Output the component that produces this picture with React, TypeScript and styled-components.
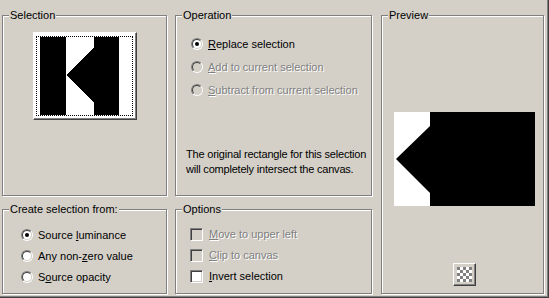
import React from "react";
import styled, { createGlobalStyle } from "styled-components";

const Global = createGlobalStyle`
  html, body { margin: 0; padding: 0; background: #d4d0c8; }
  body { font-family: "Liberation Sans", Arial, sans-serif; font-size: 11px; color: #000; }
`;

const Dialog = styled.div`
  width: 549px;
  height: 298px;
  box-sizing: border-box;
  background: #d4d0c8;
  border-right: 1px solid #404040;
  border-bottom: 1px solid #404040;
  box-shadow: inset -1px -1px 0 #808080;
  padding: 15px 0 0 2px;
  display: grid;
  grid-template-columns: 165px 197px 164px;
  grid-template-rows: 181px 85px;
  grid-template-areas:
    "sel op prev"
    "create opts prev";
  column-gap: 8px;
  row-gap: 13px;
`;

const Group = styled.div<{ $area: string; $shift?: number }>`
  position: relative;
  grid-area: ${(p) => p.$area};
  margin-left: ${(p) => p.$shift ?? 0}px;
  border: 1px solid #808080;
  box-shadow: inset 1px 1px 0 #fff, 1px 1px 0 #fff;
  display: flex;
  flex-direction: column;
`;

const Legend = styled.span`
  position: absolute;
  top: -7px;
  left: 6px;
  padding: 0 1px;
  background: #d4d0c8;
  line-height: 13px;
  white-space: nowrap;
`;

const ThumbButton = styled.div`
  margin: 16px auto 0;
  width: 104px;
  height: 88px;
  box-sizing: border-box;
  background: #fff;
  border: 1px solid;
  border-color: #fff #404040 #404040 #fff;
  box-shadow: inset -1px -1px 0 #808080;
  position: relative;
  display: flex;
  align-items: center;
  justify-content: center;
`;

const FocusRect = styled.div`
  width: 97px;
  height: 80px;
  box-sizing: border-box;
  border: 1px dotted #000;
  display: flex;
  align-items: center;
  justify-content: flex-start;
  padding-left: 3px;
`;

const OptionList = styled.div<{ $top: number; $left: number; $gap: number }>`
  display: flex;
  flex-direction: column;
  gap: ${(p) => p.$gap}px;
  margin-top: ${(p) => p.$top}px;
  padding-left: ${(p) => p.$left}px;
`;

const Row = styled.label<{ $disabled?: boolean }>`
  display: flex;
  align-items: center;
  height: 14px;
  gap: 5px;
  line-height: 14px;
  white-space: nowrap;
  color: ${(p) => (p.$disabled ? "#808080" : "#000")};
  text-shadow: ${(p) => (p.$disabled ? "1px 1px 0 #fff" : "none")};
`;

const RadioOuter = styled.span<{ $disabled?: boolean }>`
  flex: none;
  width: 12px;
  height: 12px;
  box-sizing: border-box;
  border-radius: 50%;
  border: 1px solid;
  border-color: #808080 #fff #fff #808080;
  position: relative;
  &::before {
    content: "";
    position: absolute;
    inset: 0;
    border-radius: 50%;
    border: 1px solid;
    border-color: #404040 #d4d0c8 #d4d0c8 #404040;
    background: ${(p) => (p.$disabled ? "#d4d0c8" : "#fff")};
  }
`;

const RadioDot = styled.span`
  position: absolute;
  left: 3px;
  top: 3px;
  width: 4px;
  height: 4px;
  border-radius: 50%;
  background: #000;
  z-index: 1;
`;

const CheckOuter = styled.span<{ $disabled?: boolean }>`
  flex: none;
  width: 13px;
  height: 13px;
  box-sizing: border-box;
  border: 1px solid;
  border-color: #808080 #fff #fff #808080;
  box-shadow: inset 1px 1px 0 #404040, inset -1px -1px 0 #d4d0c8;
  background: ${(p) => (p.$disabled ? "#d4d0c8" : "#fff")};
  margin-left: -1px;
  margin-right: 1px;
`;

const Info = styled.p`
  margin: 50px 0 0 10px;
  line-height: 15px;
  white-space: nowrap;
  letter-spacing: -0.2px;
`;

const PreviewImage = styled.div`
  margin: 96px 0 0 12px;
  width: 141px;
  height: 94px;
  line-height: 0;
`;

const CheckerButton = styled.div`
  margin: 57px auto 0;
  position: relative;
  left: 2px;
  width: 23px;
  height: 23px;
  box-sizing: border-box;
  border: 1px solid;
  border-color: #fff #404040 #404040 #fff;
  box-shadow: inset -1px -1px 0 #808080;
  display: flex;
  align-items: center;
  justify-content: center;
  line-height: 0;
`;

type Opt = { label: React.ReactNode; checked?: boolean; disabled?: boolean };

const Radio = ({ label, checked, disabled }: Opt) => (
  <Row $disabled={disabled}>
    <RadioOuter $disabled={disabled}>{checked && <RadioDot />}</RadioOuter>
    <span>{label}</span>
  </Row>
);

const Check = ({ label, disabled }: Opt) => (
  <Row $disabled={disabled}>
    <CheckOuter $disabled={disabled} />
    <span>{label}</span>
  </Row>
);

const Checker = () => {
  const cells = [];
  for (let r = 0; r < 5; r++)
    for (let c = 0; c < 5; c++)
      cells.push(
        <rect key={`${r}-${c}`} x={c * 3} y={r * 3} width={3} height={3} fill={(r + c) % 2 ? "#fff" : "#808080"} />
      );
  return (
    <svg width="15" height="15" viewBox="0 0 15 15">
      {cells}
    </svg>
  );
};

export default function App() {
  return (
    <>
      <Global />
      <Dialog>
        <Group $area="sel">
          <Legend>Selection</Legend>
          <ThumbButton>
            <FocusRect>
              <svg width="86" height="78" viewBox="0 0 86 78" shapeRendering="crispEdges">
                <rect width="86" height="78" fill="#fff" />
                <rect x="0" y="0" width="26" height="78" fill="#000" />
                <polygon points="54,0 79,0 79,78 54,78 54,66 26,38 54,10" fill="#000" />
              </svg>
            </FocusRect>
          </ThumbButton>
        </Group>

        <Group $area="op">
          <Legend>Operation</Legend>
          <OptionList $top={21} $left={15} $gap={9}>
            <Radio checked label={<><u>R</u>eplace selection</>} />
            <Radio disabled label={<><u>A</u>dd to current selection</>} />
            <Radio disabled label={<><u>S</u>ubtract from current selection</>} />
          </OptionList>
          <Info>
            The original rectangle for this selection
            <br />
            will completely intersect the canvas.
          </Info>
        </Group>

        <Group $area="prev" $shift={1}>
          <Legend>Preview</Legend>
          <PreviewImage>
            <svg width="141" height="94" viewBox="0 0 141 94">
              <rect width="141" height="94" fill="#fff" />
              <polygon points="36,0 141,0 141,94 36,94 36,81 2,47 36,14" fill="#000" />
            </svg>
          </PreviewImage>
          <CheckerButton>
            <Checker />
          </CheckerButton>
        </Group>

        <Group $area="create">
          <Legend>Create selection from:</Legend>
          <OptionList $top={18} $left={18} $gap={7}>
            <Radio checked label={<>Source <u>l</u>uminance</>} />
            <Radio label={<>Any non-<u>z</u>ero value</>} />
            <Radio label={<>S<u>o</u>urce opacity</>} />
          </OptionList>
        </Group>

        <Group $area="opts">
          <Legend>Options</Legend>
          <OptionList $top={17} $left={15} $gap={7}>
            <Check disabled label={<><u>M</u>ove to upper left</>} />
            <Check disabled label={<><u>C</u>lip to canvas</>} />
            <Check label={<><u>I</u>nvert selection</>} />
          </OptionList>
        </Group>
      </Dialog>
    </>
  );
}
